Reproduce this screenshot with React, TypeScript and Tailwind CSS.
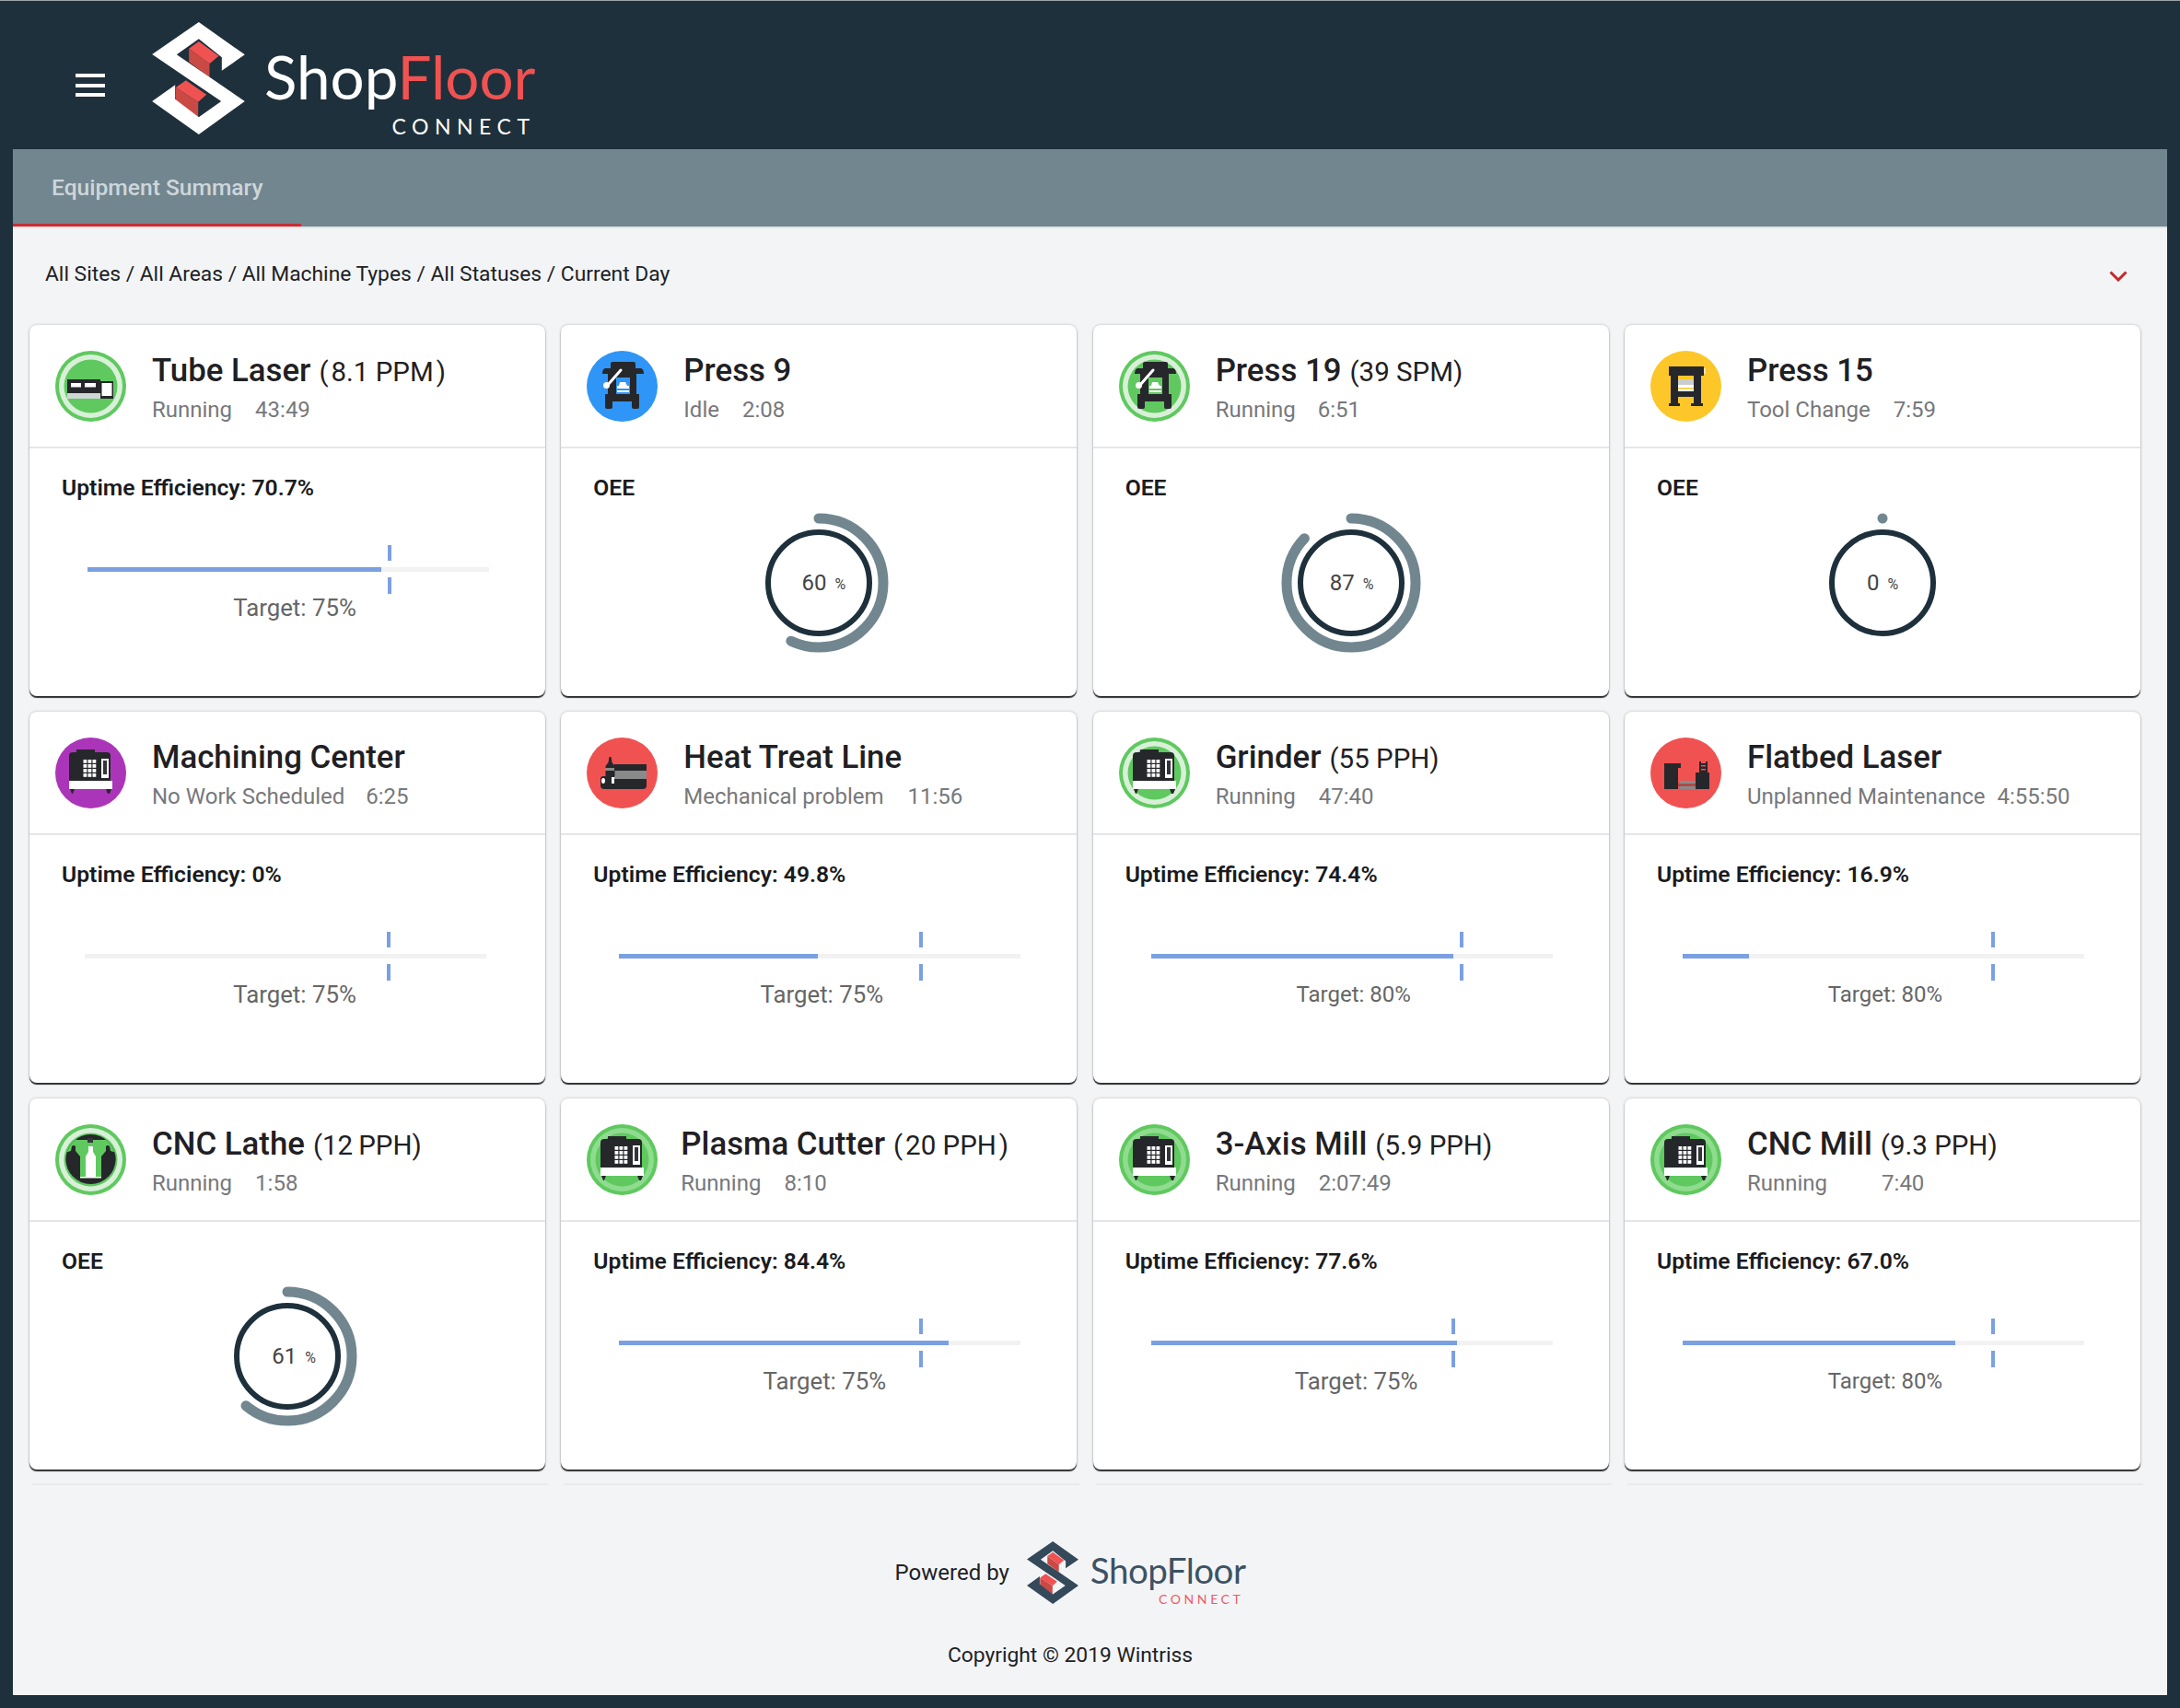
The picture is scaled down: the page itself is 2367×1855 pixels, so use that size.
// Equipment summary dashboard

const GREEN = '#5fc95f'
const DARK = '#26272b'

function Ring({ band = '#d8f0d8' }: { band?: string }) {
    return (
        <>
            <circle cx="38.5" cy="38.5" r="38.5" fill={GREEN} />
            <circle cx="38.5" cy="38.5" r="34.5" fill={band} />
            <circle cx="38.5" cy="38.5" r="29" fill={GREEN} />
        </>
    )
}

function PressMachine({ c }: { c: string }) {
    return (
        <>
            <path d="M26 14 q0 -2 2 -2 h23 q2 0 2 2 v5 h6 q3 1 3 6 h-8 v22 h3 v14 q0 2 -2 2 h-4 q-2 0 -2 -2 v-6 h-21 v6 q0 2 -2 2 h-4 q-2 0 -2 -2 v-14 h3 v-22 h-6 q0 -5 3 -6 h6 z" fill={DARK} />
            <rect x="32" y="29" width="15" height="18" fill={c} />
            <path d="M36 34 h6 l2 4 h2 v3 h-13 v-3 h2 z" fill="#fff" />
            <rect x="33" y="43" width="13" height="2" fill="#fff" />
            <path d="M37 21 L23 37" stroke="#fff" strokeWidth="3" strokeLinecap="round" />
            <circle cx="21.5" cy="37.5" r="3.5" fill="#fff" />
        </>
    )
}

function PressFrame({ c }: { c: string }) {
    return (
        <>
            <rect x="20" y="17" width="38" height="10" fill={DARK} />
            <rect x="58" y="19" width="2" height="6" fill="#e6e0c8" />
            <rect x="22" y="27" width="8" height="32" fill={DARK} />
            <rect x="47" y="27" width="8" height="32" fill={DARK} />
            <rect x="20" y="57" width="12" height="3" fill={DARK} />
            <rect x="44" y="57" width="13" height="3" fill={DARK} />
            <rect x="30" y="44" width="17" height="6" fill={DARK} />
            <rect x="30" y="27" width="17" height="4" fill={c} />
            <rect x="30" y="31" width="17" height="6" fill="#c9cfcf" />
            <rect x="30" y="37" width="17" height="3" fill="#fff" />
            <rect x="30" y="40" width="17" height="1.5" fill={c} />
            <rect x="30" y="41.5" width="17" height="2.5" fill="#fff" />
        </>
    )
}

function Mill() {
    const rows = [24, 29, 34, 39]
    const cols = [30.5, 35.5, 40.5]
    return (
        <>
            <rect x="23" y="13" width="20" height="4" fill={DARK} />
            <path d="M15 20 q0 -4 4 -4 h37 q4 0 4 4 v28 h-45 z" fill={DARK} />
            {rows.map(y => cols.map(x => <rect key={x + '-' + y} x={x} y={y} width="3.8" height="3.8" fill="#fff" />))}
            <rect x="50" y="23" width="8" height="21" fill="#fff" />
            <rect x="52" y="25" width="4" height="15" fill="#33353a" />
            <rect x="15" y="47" width="47" height="9" fill="#fff" />
            <path d="M16 56 h5 l-2 5 h-1 z M55 56 h6 l-2 5 h-2 z" fill={DARK} />
        </>
    )
}

function TubeLaser() {
    return (
        <>
            <rect x="13" y="31" width="36" height="16" fill={DARK} />
            <rect x="17" y="35" width="11" height="4.5" fill="#fff" />
            <rect x="32" y="35" width="12" height="4.5" fill="#fff" />
            <rect x="13" y="46" width="36" height="6" fill="#cfd6d6" />
            <rect x="49" y="33" width="14" height="19" fill={DARK} />
            <rect x="50.5" y="35" width="11" height="14" fill="#fff" />
        </>
    )
}

function HeatTreat() {
    return (
        <>
            <path d="M30 29 h35 v23 q0 4 -4 4 h-31 z" fill={DARK} />
            <rect x="30" y="36" width="35" height="9" fill="#8a8a8a" />
            <path d="M23.5 27 l1 -6 h2 l1 6 l3 4 v11 h-10 v-11 z" fill={DARK} />
            <rect x="20" y="33" width="10" height="3" fill="#8a8a8a" />
            <path d="M15 45 q0 -3 3 -3 h12 v14 h-11 q-4 0 -4 -4 z" fill={DARK} />
            <ellipse cx="18" cy="47" rx="2" ry="3" fill="#fff" />
            <rect x="27" y="43" width="3" height="7" fill="#fff" />
        </>
    )
}

function Flatbed() {
    return (
        <>
            <path d="M15 28 h15 v28 h-15 z" fill={DARK} />
            <rect x="30" y="28" width="3" height="5" fill={DARK} />
            <rect x="32" y="47" width="17" height="3" fill="#8a8a8a" />
            <rect x="32" y="53" width="17" height="3" fill="#8a8a8a" />
            <rect x="30" y="50" width="20" height="3" fill="#b04a48" />
            <path d="M49 38 h15 v18 h-15 z" fill={DARK} />
            <path d="M53 26 h2 v2 h5 v-2 h2 v13 h-9 z" fill={DARK} />
            <rect x="55" y="30" width="5" height="1.5" fill="#f05252" />
            <rect x="55" y="34" width="5" height="1.5" fill="#f05252" />
        </>
    )
}

function Lathe() {
    return (
        <>
            <clipPath id="lathe-clip">
                <circle cx="38.5" cy="38" r="27" />
            </clipPath>
            <circle cx="38.5" cy="38" r="27" fill={DARK} />
            <g clipPath="url(#lathe-clip)">
                <rect x="10" y="17" width="57" height="40" fill={GREEN} />
                <path d="M18 24 q2 -2 4 0 v5 l5 6 v22 h-17 v-26 l7 -2 z" fill={DARK} />
                <path d="M59 24 q-2 -2 -4 0 v5 l-5 6 v22 h17 v-26 l-7 -2 z" fill={DARK} />
            </g>
            <rect x="35" y="15" width="6" height="5" fill="#33353a" />
            <path d="M36 24 h5 v6 l3 5 v22 h-11 v-22 l3 -5 z" fill="#fff" />
            <rect x="27" y="57" width="23" height="1.5" fill="#fff" />
        </>
    )
}

function Icon({ name, band }: { name: string; band?: string }) {
    return (
        <svg viewBox="0 0 77 77" className="w-[77px] h-[77px] shrink-0">
            {name === 'tube' && <><Ring /><TubeLaser /></>}
            {name === 'press-idle' && <><circle cx="38.5" cy="38.5" r="38.5" fill="#2f95f6" /><PressMachine c="#2f95f6" /></>}
            {name === 'press-run' && <><Ring /><PressMachine c={GREEN} /></>}
            {name === 'press-tool' && <><circle cx="38.5" cy="38.5" r="38.5" fill="#fdc72a" /><PressFrame c="#fdc72a" /></>}
            {name === 'mill-idle' && <><circle cx="38.5" cy="38.5" r="38.5" fill="#ab35b8" /><Mill /></>}
            {name === 'heat' && <><circle cx="38.5" cy="38.5" r="38.5" fill="#f05252" /><HeatTreat /></>}
            {name === 'mill-run' && <><Ring band={band} /><Mill /></>}
            {name === 'flatbed' && <><circle cx="38.5" cy="38.5" r="38.5" fill="#f05252" /><Flatbed /></>}
            {name === 'lathe' && <><Ring /><Lathe /></>}
        </svg>
    )
}

function LogoMark({ color, className }: { color: string; className: string }) {
    return (
        <svg viewBox="45 42 302 366" className={className}>
            <path d="M165 128 L197 105 L262 152 L232 178 Z M122 255 L155 232 L222 278 L195 302 Z" fill="#f05252" />
            <path d="M165 128 L232 178 L232 222 L165 172 Z M122 255 L195 302 L195 352 L122 298 Z" fill="#c94a45" />
            <polygon points="197,42 347,148 272,200 272,157 197,97 125,148 347,300 197,408 45,300 120,247 120,293 197,352 270,300 45,147" fill={color} />
        </svg>
    )
}

function Slider({ fill, tick, barClass }: { fill: number; tick: number; barClass: string }) {
    return (
        <div className={`relative w-[436px] h-[53px] pt-[24px] ${barClass}`}>
            <div className="h-[5px] bg-[#f2f2f2]">
                <div className="h-[5px] bg-[#7ba0e2]" style={{ width: fill }} />
            </div>
            <div className="absolute top-0 w-[4px] h-[17px] bg-[#7ba0e2]" style={{ left: tick }} />
            <div className="absolute top-[35px] w-[4px] h-[18px] bg-[#7ba0e2]" style={{ left: tick }} />
        </div>
    )
}

function Donut({ value, drawn, textClass }: { value: number; drawn: number; textClass: string }) {
    const r = 70
    const len = 2 * Math.PI * r
    return (
        <div className="relative w-[152px] h-[152px] mt-[12px]">
            <svg viewBox="0 0 152 152" className="w-[152px] h-[152px] -rotate-90">
                <circle cx="76" cy="76" r={r} fill="none" stroke="#72868f" strokeWidth="11" strokeLinecap="round" strokeDasharray={`${(len * drawn) / 100} ${len}`} />
                <circle cx="76" cy="76" r="55" fill="none" stroke="#1e303b" strokeWidth="6" />
            </svg>
            <div className={`absolute inset-0 flex items-center justify-center text-[#444] ${textClass}`}>
                <span className="text-[24px] leading-none">{value}</span>
                <span className="text-[16px] ml-[9px] mt-[3px] leading-none">%</span>
            </div>
        </div>
    )
}

type Machine = {
    name: string
    rate?: string
    status: string
    time: string
    gap: string
    icon: string
    band?: string
    nameClass?: string
    uptime?: string
    fill?: number
    tick?: number
    target?: number
    targetClass?: string
    barClass?: string
    oee?: number
    drawn?: number
    textClass?: string
}

const machines: Machine[] = [
    { name: 'Tube Laser', rate: '(\u200A8.1 PPM\u200A)', status: 'Running', time: '43:49', gap: 'ml-[25px]', icon: 'tube', uptime: '70.7%', fill: 319, tick: 326, target: 75, targetClass: 'pl-[16px]' },
    { name: 'Press 9', status: 'Idle', time: '2:08', gap: 'ml-[25px]', icon: 'press-idle', oee: 60, drawn: 57, textClass: 'pl-[10px]' },
    { name: 'Press 19', rate: '(39 SPM)', status: 'Running', time: '6:51', gap: 'ml-[24px]', icon: 'press-run', oee: 87, drawn: 87, textClass: 'pl-[2px]' },
    { name: 'Press 15', status: 'Tool Change', time: '7:59', gap: 'ml-[25px]', icon: 'press-tool', oee: 0, drawn: 0, textClass: '' },
    { name: 'Machining Center', status: 'No Work Scheduled', time: '6:25', gap: 'ml-[23px]', icon: 'mill-idle', uptime: '0%', fill: 0, tick: 328, target: 75, targetClass: 'pl-[16px]', barClass: 'ml-[25px]' },
    { name: 'Heat Treat Line', status: 'Mechanical problem', time: '11:56', gap: 'ml-[26px]', icon: 'heat', uptime: '49.8%', fill: 216, tick: 326, target: 75, targetClass: 'pl-[6px]' },
    { name: 'Grinder', rate: '(55 PPH)', status: 'Running', time: '47:40', gap: 'ml-[25px]', icon: 'mill-run', uptime: '74.4%', fill: 328, tick: 335, target: 80, targetClass: 'pl-[6px]' },
    { name: 'Flatbed Laser', status: 'Unplanned Maintenance', time: '4:55:50', gap: 'ml-[13px]', icon: 'flatbed', uptime: '16.9%', fill: 72, tick: 335, target: 80, targetClass: 'pl-[6px]' },
    { name: 'CNC Lathe', rate: '(12\u2009PPH)', status: 'Running', time: '1:58', gap: 'ml-[25px]', icon: 'lathe', oee: 61, drawn: 61, textClass: 'pl-[14px]' },
    { name: 'Plasma Cutter', rate: '(\u200A20 PPH\u200A)', status: 'Running', time: '8:10', gap: 'ml-[25px]', icon: 'mill-run', band: '#8fdc8f', nameClass: 'ml-[25px]', uptime: '84.4%', fill: 358, tick: 326, target: 75, targetClass: 'pl-[12px]' },
    { name: '3-Axis Mill', rate: '(5.9 PPH)', status: 'Running', time: '2:07:49', gap: 'ml-[25px]', icon: 'mill-run', band: '#8fdc8f', uptime: '77.6%', fill: 332, tick: 326, target: 75, targetClass: 'pl-[12px]' },
    { name: 'CNC Mill', rate: '(9.3 PPH)', status: 'Running', time: '7:40', gap: 'ml-[59px]', icon: 'mill-run', band: '#8fdc8f', uptime: '67.0%', fill: 296, tick: 335, target: 80, targetClass: 'pl-[6px]' },
]

function Card({ m }: { m: Machine }) {
    return (
        <div className="h-[403px] bg-white rounded-[8px] shadow-[0_2px_1px_rgba(0,0,0,0.8),0_0_3px_rgba(0,0,0,0.25)]">
            <div className="h-[134px] border-b-2 border-[#e4e6e8] flex pt-[28px] pl-[28px]">
                <Icon name={m.icon} band={m.band} />
                <div className={m.nameClass ?? 'ml-[28px]'}>
                    <div className="h-[40px] mt-[1px] text-[34.8px] leading-[40px] font-medium text-[#1f2023] whitespace-nowrap">
                        {m.name}
                        {m.rate && <span className="text-[29.5px] font-normal ml-[9px]">{m.rate}</span>}
                    </div>
                    <div className="mt-[8px] text-[24px] leading-[30px] text-[#77787b] whitespace-nowrap">
                        {m.status}
                        <span className={m.gap}>{m.time}</span>
                    </div>
                </div>
            </div>
            <div className="px-[35px] pt-[28px]">
                {m.uptime !== undefined ? (
                    <>
                        <div className="text-[24.7px] leading-[30px] font-semibold text-[#1a1b1e]">Uptime Efficiency: {m.uptime}</div>
                        <div className="mt-[47px]">
                            <Slider fill={m.fill ?? 0} tick={m.tick ?? 0} barClass={m.barClass ?? 'ml-[28px]'} />
                        </div>
                        <div className={`text-center leading-[30px] text-[#666] ${m.target === 80 ? 'text-[24px]' : 'text-[25.8px]'} ${m.targetClass ?? ''}`}>Target: {m.target}%</div>
                    </>
                ) : (
                    <>
                        <div className="text-[24.7px] leading-[30px] font-semibold text-[#1a1b1e]">OEE</div>
                        <div className="flex justify-center">
                            <Donut value={m.oee ?? 0} drawn={m.drawn ?? 0} textClass={m.textClass ?? ''} />
                        </div>
                    </>
                )}
            </div>
        </div>
    )
}

function App() {
    return (
        <div className="min-h-screen bg-[#1e303b] border-t border-[#9aa5ab] px-[14px] pb-[15px] font-['Roboto',sans-serif]">
            <div className="h-[161px] flex items-start pt-[23px]">
                <div className="ml-[68px] mt-[56px] flex flex-col gap-[6.5px]">
                    <div className="w-[32px] h-[4px] bg-white" />
                    <div className="w-[32px] h-[4px] bg-white" />
                    <div className="w-[32px] h-[4px] bg-white" />
                </div>
                <LogoMark color="#fff" className="ml-[51px] w-[101px] h-[122px]" />
                <div className="ml-[21px] mt-[27px] flex flex-col font-['Lato',sans-serif]">
                    <div className="text-[65.5px] leading-[64px] font-normal text-white">
                        Shop<span className="text-[#f05252]">Floor</span>
                    </div>
                    <div className="self-end mt-[11px] text-[23px] leading-[23px] tracking-[6.5px] text-white">CONNECT</div>
                </div>
            </div>

            <div className="h-[84px] bg-[#72868f] relative flex items-center">
                <div className="ml-[42px] text-[24.6px] font-medium text-[#ced6da]">Equipment Summary</div>
                <div className="absolute left-0 bottom-0 w-[313px] h-[3px] bg-[#c62f36]" />
            </div>

            <div className="bg-[#f3f4f6] border-t-2 border-[#e1e3e5] px-[18px]">
                <div className="h-[98px] mb-[7px] pt-[2px] pl-[17px] pr-[25px] flex items-center justify-between">
                    <div className="text-[22.8px] text-[#202124]">All Sites / All Areas / All Machine Types / All Statuses / Current Day</div>
                    <svg viewBox="0 0 20 12" className="w-[20px] h-[12px] mt-[4px]">
                        <path d="M1.5 1.5 L10 10 L18.5 1.5" fill="none" stroke="#c62828" strokeWidth="3" />
                    </svg>
                </div>

                <div className="grid grid-cols-[repeat(4,560px)] gap-x-[17.33px] gap-y-[17px]">
                    {machines.map(m => <Card key={m.name} m={m} />)}
                </div>
                <div className="grid grid-cols-[repeat(4,560px)] gap-x-[17.33px] mt-[15px] px-[3px]">
                    <div className="h-[2px] bg-[#e8eaec]" />
                    <div className="h-[2px] bg-[#e8eaec]" />
                    <div className="h-[2px] bg-[#e8eaec]" />
                    <div className="h-[2px] bg-[#e8eaec]" />
                </div>

                <div className="pr-[43px] pb-[28px]">
                    <div className="mt-[59px] flex justify-center items-center">
                        <div className="text-[24px] leading-[30px] text-[#202124]">Powered by</div>
                        <LogoMark color="#34495a" className="ml-[19px] w-[56px] h-[70px]" />
                        <div className="ml-[13px] self-start mt-[15px] flex flex-col font-['Lato',sans-serif]">
                            <div className="text-[38.5px] leading-[37px] text-[#3d5263] tracking-[-0.5px]">ShopFloor</div>
                            <div className="self-end mt-[6px] mr-[2px] text-[14px] leading-[13px] tracking-[3.6px] text-[#ef5a63]">CONNECT</div>
                        </div>
                    </div>
                    <div className="mt-[40px] text-center text-[22.8px] leading-[30px] text-[#202124]">Copyright © 2019 Wintriss</div>
                </div>
            </div>
        </div>
    )
}

export default App
